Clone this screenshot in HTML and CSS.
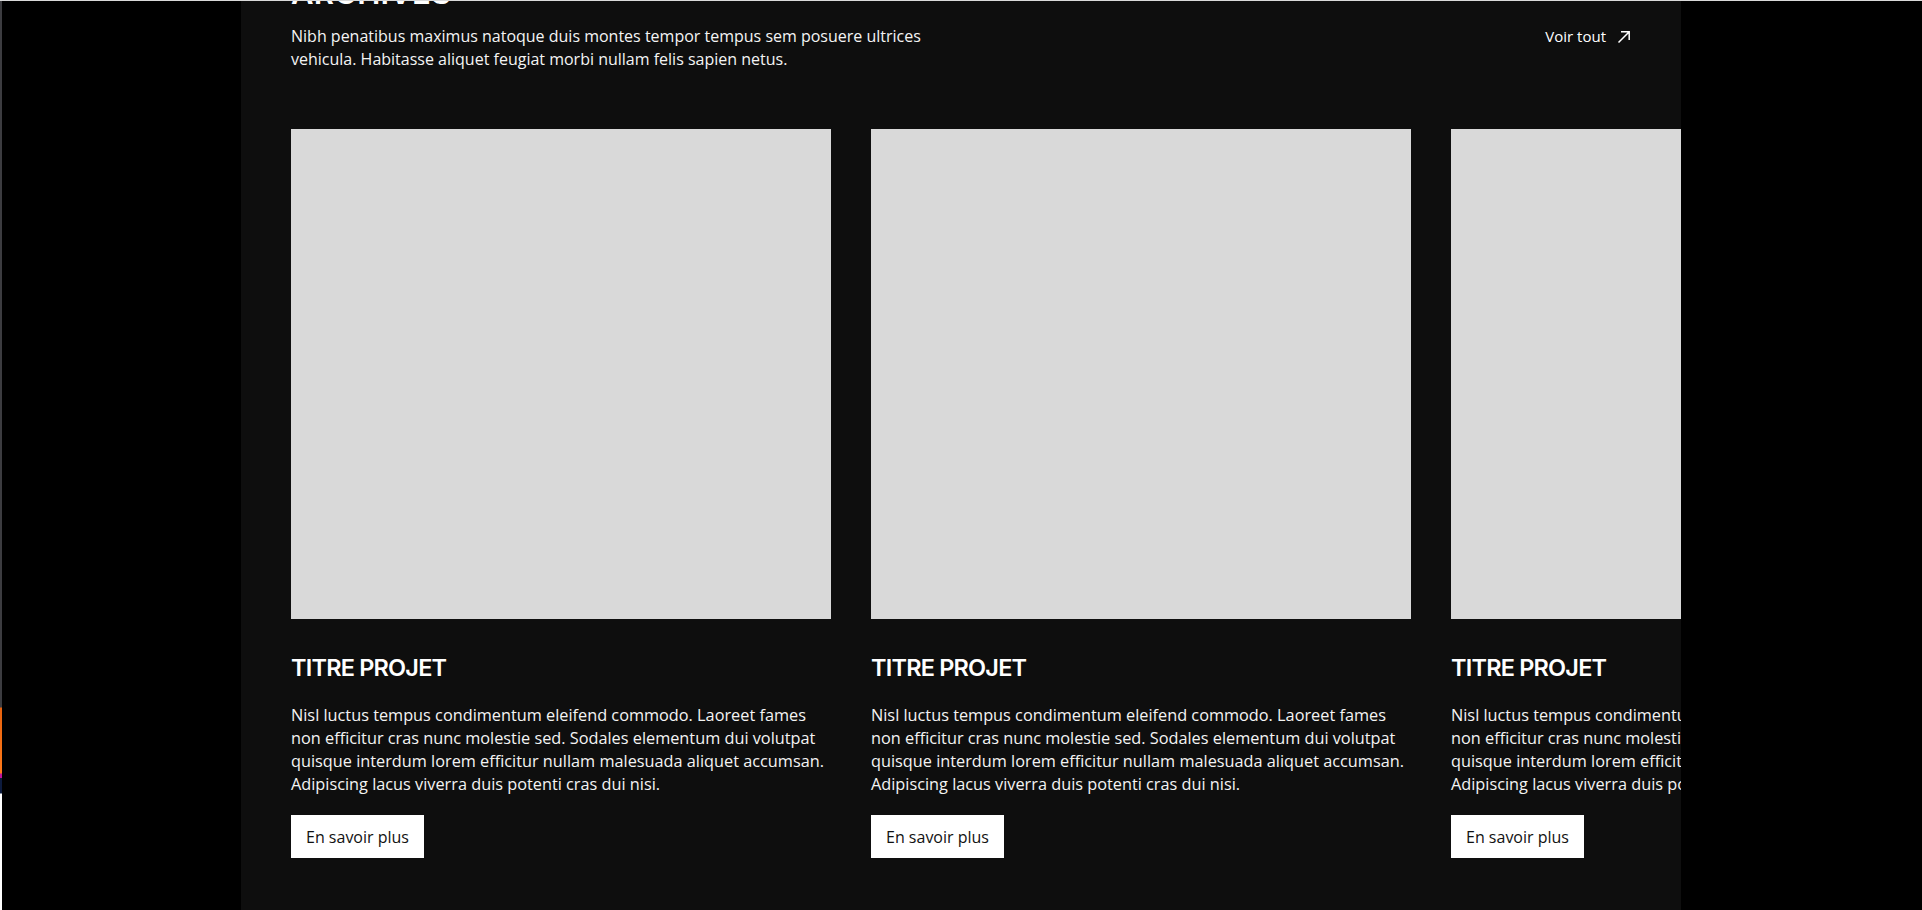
FILE: index.html
```html
<!DOCTYPE html>
<html lang="fr">
<head>
<meta charset="utf-8">
<title>Archives</title>
<link rel="stylesheet" href="styles.css">
</head>
<body>
<div class="edge"></div>
<section class="projects">
  <header class="head">
    <div class="head-text">
      <h2 class="head-title">ARCHIVES</h2>
      <p class="head-sub">Nibh penatibus maximus natoque duis montes tempor tempus sem posuere ultrices vehicula. Habitasse aliquet feugiat morbi nullam felis sapien netus.</p>
    </div>
    <a class="see-all" href="#">Voir tout
      <svg class="see-all-icon" width="14" height="14" viewBox="0 0 14 14" aria-hidden="true"><path d="M1.5 12.5 L12 2 M4 1.8 H12.2 V10" fill="none" stroke="#fff" stroke-width="1.5"/></svg>
    </a>
  </header>
  <div class="track">
    <article class="card">
      <div class="card-img"></div>
      <h3 class="card-title">TITRE PROJET</h3>
      <p class="card-text">Nisl luctus tempus condimentum eleifend commodo. Laoreet fames non efficitur cras nunc molestie sed. Sodales elementum dui volutpat quisque interdum lorem efficitur nullam malesuada aliquet accumsan. Adipiscing lacus viverra duis potenti cras dui nisi.</p>
      <a class="card-btn" href="#">En savoir plus</a>
    </article>
    <article class="card">
      <div class="card-img"></div>
      <h3 class="card-title">TITRE PROJET</h3>
      <p class="card-text">Nisl luctus tempus condimentum eleifend commodo. Laoreet fames non efficitur cras nunc molestie sed. Sodales elementum dui volutpat quisque interdum lorem efficitur nullam malesuada aliquet accumsan. Adipiscing lacus viverra duis potenti cras dui nisi.</p>
      <a class="card-btn" href="#">En savoir plus</a>
    </article>
    <article class="card">
      <div class="card-img"></div>
      <h3 class="card-title">TITRE PROJET</h3>
      <p class="card-text">Nisl luctus tempus condimentum eleifend commodo. Laoreet fames non efficitur cras nunc molestie sed. Sodales elementum dui volutpat quisque interdum lorem efficitur nullam malesuada aliquet accumsan. Adipiscing lacus viverra duis potenti cras dui nisi.</p>
      <a class="card-btn" href="#">En savoir plus</a>
    </article>
  </div>
</section>
</body>
</html>
```

FILE: styles.css
```css
html, body {
  margin: 0;
  padding: 0;
}
body {
  background: #000;
  border-top: 1px solid #d9d9d9;
  font-family: "Open Sans", "Liberation Sans", sans-serif;
  color: #f4f4f4;
  height: 909px;
  overflow: hidden;
}
.edge {
  position: fixed;
  left: 0;
  top: 1px;
  width: 2px;
  height: 909px;
  background: linear-gradient(to bottom,
    #3c3c40 0, #3c3c40 706px,
    #e8620e 707px, #ff7a1a 772px,
    #c0139a 773px, #c0139a 777px,
    #0d1b3e 777px, #0d1b3e 792px,
    #ffffff 793px, #ffffff 100%);
}
.projects {
  width: 1440px;
  box-sizing: border-box;
  margin: 0 auto;
  padding: 0 50px 60px;
  background: #0e0e0e;
  overflow: hidden;
  min-height: 909px;
}
.head {
  display: flex;
  justify-content: space-between;
  align-items: flex-end;
}
.head-title {
  margin: -25px 0 0;
  font-family: Inter, "Liberation Sans", sans-serif;
  font-weight: 600;
  font-size: 31px;
  line-height: 34px;
  letter-spacing: 0.2px;
  color: #fff;
}
.head-sub {
  margin: 15px 0 0;
  max-width: 645px;
  font-size: 16px;
  line-height: 23px;
}
.see-all {
  display: flex;
  align-items: center;
  gap: 11px;
  margin-bottom: 23px;
  color: #fff;
  text-decoration: none;
  font-size: 15px;
  line-height: 23px;
}
.see-all-icon {
  display: block;
}
.track {
  display: flex;
  gap: 40px;
  margin-top: 58px;
}
.card {
  flex: 0 0 540px;
  width: 540px;
  display: flex;
  flex-direction: column;
  align-items: flex-start;
}
.card-img {
  width: 540px;
  height: 490px;
  background: #d9d9d9;
}
.card-title {
  margin: 34px 0 0;
  font-family: Inter, "Liberation Sans", sans-serif;
  font-weight: 600;
  font-size: 23.5px;
  line-height: 30px;
  letter-spacing: -0.8px;
  color: #fff;
}
.card-text {
  margin: 21px 0 0;
  font-size: 16.3px;
  line-height: 23px;
}
.card-btn {
  margin-top: 19px;
  padding: 0 15px;
  height: 43px;
  display: flex;
  align-items: center;
  background: #fff;
  color: #111;
  text-decoration: none;
  font-size: 16px;
}
```
